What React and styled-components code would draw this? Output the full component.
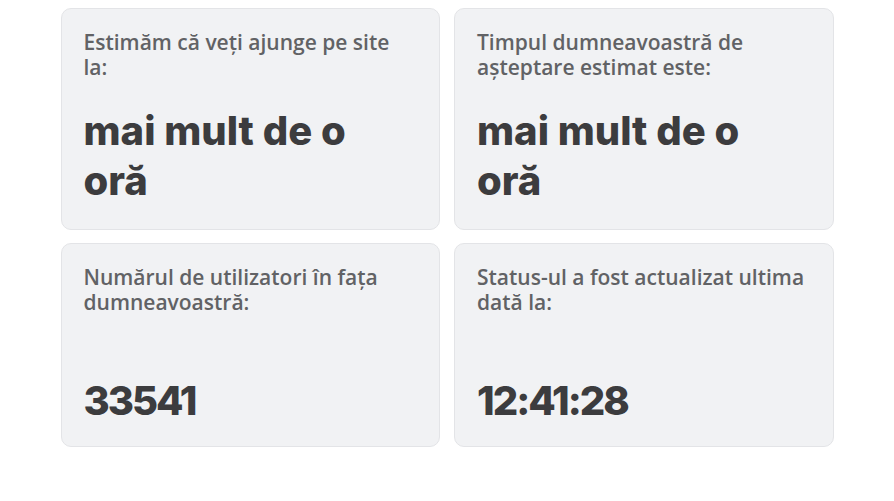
import React from 'react';
import styled, { createGlobalStyle } from 'styled-components';

const GlobalStyle = createGlobalStyle`
  body {
    margin: 0;
    background: #ffffff;
  }
`;

const Page = styled.main`
  padding: 8px 0 0;
`;

const Grid = styled.section`
  display: grid;
  grid-template-columns: 1fr 1fr;
  column-gap: 14px;
  row-gap: 13px;
  width: 773px;
  margin: 0 auto;
`;

const Card = styled.div`
  display: flex;
  flex-direction: column;
  justify-content: ${(p) => (p.$spread ? 'space-between' : 'flex-start')};
  min-height: ${(p) => p.$minHeight}px;
  box-sizing: border-box;
  padding: 21px 22px 20px;
  background: #f1f2f4;
  border: 1px solid #e3e4e7;
  border-radius: 10px;
`;

const Label = styled.p`
  margin: 0;
  font-family: 'Open Sans', sans-serif;
  font-weight: 600;
  font-size: 21px;
  line-height: 25px;
  color: #616265;
`;

const Value = styled.p`
  margin: ${(p) => (p.$spaced ? '26px' : '0')} 0 0;
  max-width: 300px;
  font-family: Inter, sans-serif;
  font-weight: 800;
  font-size: 40px;
  line-height: 50px;
  letter-spacing: ${(p) => (p.$digits ? '-2px' : '0')};
  color: #3c3c3e;
`;

const stats = [
  { label: 'Estimăm că veți ajunge pe site la:', value: 'mai mult de o oră', top: true },
  { label: 'Timpul dumneavoastră de așteptare estimat este:', value: 'mai mult de o oră', top: true },
  { label: 'Numărul de utilizatori în fața dumneavoastră:', value: '33541' },
  { label: 'Status-ul a fost actualizat ultima dată la:', value: '12:41:28' }
];

const App = () => {
  return (
    <>
      <GlobalStyle />
      <Page>
        <Grid>
          {stats.map((s) => (
            <Card key={s.label} $spread={!s.top} $minHeight={s.top ? 222 : 204}>
              <Label>{s.label}</Label>
              <Value $spaced={s.top} $digits={!s.top}>
                {s.value}
              </Value>
            </Card>
          ))}
        </Grid>
      </Page>
    </>
  );
};

export default App;
